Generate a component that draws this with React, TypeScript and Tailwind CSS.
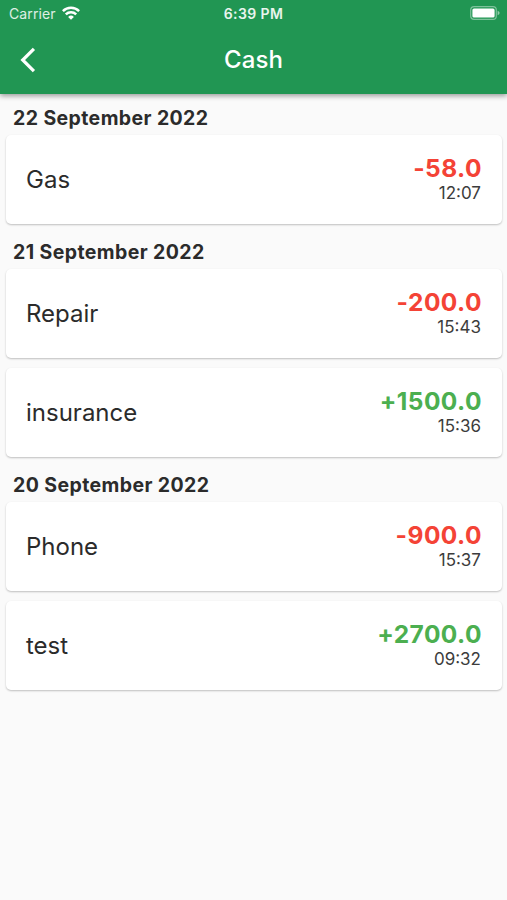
import React from 'react';

interface Transaction {
  id: number;
  title: string;
  amount: number;
  time: string;
}

interface DayGroup {
  date: string;
  items: Transaction[];
}

const groups: DayGroup[] = [
  {
    date: '22 September 2022',
    items: [{ id: 1, title: 'Gas', amount: -58, time: '12:07' }],
  },
  {
    date: '21 September 2022',
    items: [
      { id: 2, title: 'Repair', amount: -200, time: '15:43' },
      { id: 3, title: 'insurance', amount: 1500, time: '15:36' },
    ],
  },
  {
    date: '20 September 2022',
    items: [
      { id: 4, title: 'Phone', amount: -900, time: '15:37' },
      { id: 5, title: 'test', amount: 2700, time: '09:32' },
    ],
  },
];

const formatAmount = (amount: number) => `${amount > 0 ? '+' : ''}${amount.toFixed(1)}`;

const WifiIcon = () => (
  <svg className="-mt-[2px]" width="18" height="14" viewBox="0 0 18 14" fill="none" stroke="white" strokeWidth="2.5">
    <path d="M0.9 5.1 A11.6 11.6 0 0 1 17.1 5.1" />
    <path d="M3.8 8.3 A7.5 7.5 0 0 1 14.2 8.3" />
    <path d="M9 13.8 L6.1 10.9 A4.1 4.1 0 0 1 11.9 10.9 Z" fill="white" stroke="none" />
  </svg>
);

const BatteryIcon = () => (
  <svg className="-mt-px" width="31" height="14" viewBox="0 0 31 14" fill="none">
    <rect x="0.7" y="0.7" width="25.6" height="12.6" rx="3.4" stroke="white" strokeOpacity="0.42" strokeWidth="1.2" />
    <rect x="2.4" y="2.4" width="22.2" height="9.2" rx="1.6" fill="white" />
    <path d="M27.6 4.8 C30.2 5.6 30.2 8.4 27.6 9.2 Z" fill="white" fillOpacity="0.5" />
  </svg>
);

const StatusBar = () => (
  <div className="grid h-[27px] grid-cols-3 items-center pl-[9px] pr-[6px] text-white">
    <div className="flex items-center gap-[6px]">
      <span className="text-[14px] leading-[27px] tracking-[0.1px] text-white/85">Carrier</span>
      <WifiIcon />
    </div>
    <span className="-ml-[3px] text-center text-[14px] font-semibold leading-[27px] tracking-[0.4px] text-white/90">6:39 PM</span>
    <div className="flex justify-end">
      <BatteryIcon />
    </div>
  </div>
);

const Header = () => (
  <header className="relative z-10 h-[94px] bg-[#219653] shadow-[0_2px_5px_rgba(0,0,0,0.38)]">
    <StatusBar />
    <div className="grid h-[66px] grid-cols-3 items-center">
      <button className="ml-[20px] w-[16px]" aria-label="Back">
        <svg width="16" height="26" viewBox="0 0 16 26" fill="none" stroke="white" strokeWidth="3.2">
          <path d="M13.9 1.8 L2.7 13 L13.9 24.2" />
        </svg>
      </button>
      <h1 className="text-center text-[24px] font-medium tracking-[0.1px] text-white">Cash</h1>
    </div>
  </header>
);

const TransactionCard: React.FC<{ item: Transaction }> = ({ item }) => (
  <div className="flex h-[89px] items-center justify-between rounded-[5px] bg-white pl-5 pr-[21px] shadow-[0_1px_2px_rgba(0,0,0,0.24)]">
    <span className="text-[24px] text-[#2b2b2b]">{item.title}</span>
    <div className="flex flex-col items-end">
      <span className={`-mr-px text-[24.5px] font-bold leading-[27px] tracking-[0.45px] ${item.amount < 0 ? 'text-[#f44336]' : 'text-[#4caf50]'}`}>
        {formatAmount(item.amount)}
      </span>
      <span className="text-[17px] leading-[22px] text-[#3c3c3c]">{item.time}</span>
    </div>
  </div>
);

export default function App() {
  return (
    <div className="min-h-[900px] w-full bg-[#fafafa] font-['Inter',sans-serif]">
      <Header />
      <main className="pt-px">
        {groups.map((group) => (
          <section key={group.date}>
            <h2 className="h-[35px] pl-[13px] pt-[10px] text-[19.5px] font-bold leading-[26px] tracking-[0.4px] text-[#2b2b2b]">{group.date}</h2>
            <div className="flex flex-col gap-[10px] py-[5px] pl-[6px] pr-[5px]">
              {group.items.map((item) => (
                <TransactionCard key={item.id} item={item} />
              ))}
            </div>
          </section>
        ))}
      </main>
    </div>
  );
}
